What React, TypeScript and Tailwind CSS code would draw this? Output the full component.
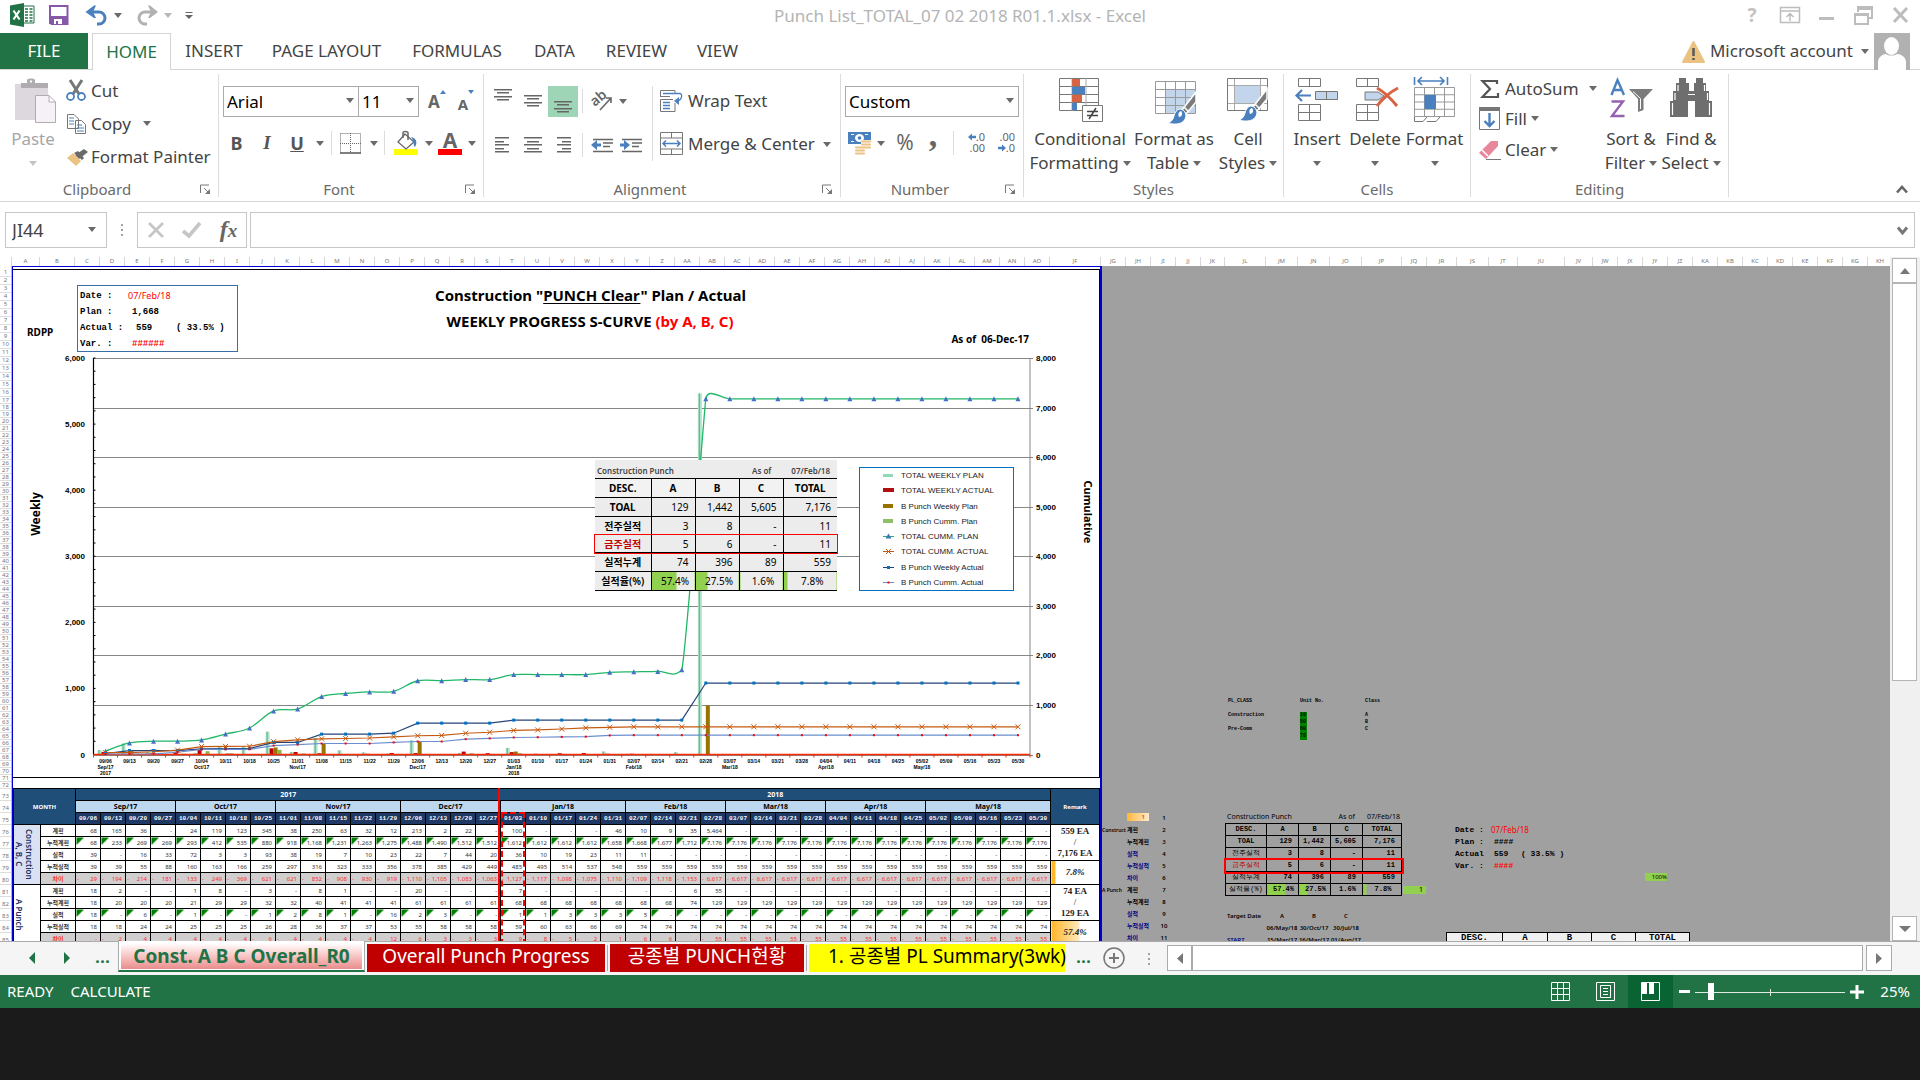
import React from "react";

const MONO = "font-['Liberation_Mono',monospace]";
const KR = "font-['Noto_Sans','Noto_Sans_CJK_KR',sans-serif]";

function Caret({ className = "fill-[#6a6a6a]" }: { className?: string }) {
  return (
    <svg width="8" height="5" viewBox="0 0 8 5" className={`shrink-0 ${className}`} aria-hidden="true">
      <path d="M0 0H8L4 5Z" />
    </svg>
  );
}

function Icon({ box, children }: { box: string; children: React.ReactNode }) {
  const [, , w, h] = box.split(" ");
  return (
    <svg width={w} height={h} viewBox={box} className="shrink-0 overflow-visible" fill="none" aria-hidden="true">
      {children}
    </svg>
  );
}

function ArrowButton({ label, className }: { label: string; className: string }) {
  return (
    <button type="button" aria-label={label} className={`flex items-center justify-center ${className}`}>
      <Caret />
    </button>
  );
}

/* ---------- Title bar ---------- */

function TitleBar() {
  return (
    <header className="flex h-[33px] shrink-0 items-start text-[#b4b4b4]">
      <div className="flex w-[640px] items-start">
        <div className="ml-[9px] pt-[3px]">
          <Icon box="9 3 26 24">
            <path d="M23 6H34V23H23Z" fill="#fff" stroke="#217346" />
            <path d="M25 9h3M25 12h3M25 15h3M25 18h3M25 21h3M29.500 9h3M29.500 12h3M29.500 15h3M29.500 18h3M29.500 21h3" stroke="#217346" strokeWidth="1.500" />
            <path d="M10 5.500L24 3V27L10 24.500Z" fill="#217346" />
            <path d="M13.500 10.500L19.500 19.500M19.500 10.500L13.500 19.500" stroke="#fff" strokeWidth="2.200" />
          </Icon>
        </div>
        <button type="button" aria-label="Save" className="ml-[14px] pt-[5px]">
          <Icon box="49 5 20 20">
            <path d="M50 6H67.500V24H51.500L50 22.500Z" fill="#fff" stroke="#8758a8" strokeWidth="2" />
            <path d="M49 16H68V24H49Z" fill="#8758a8" />
            <path d="M54 19H62V24H58V21H56V24H54Z" fill="#fff" />
          </Icon>
        </button>
        <button type="button" aria-label="Undo" className="ml-[16px] pt-[5px]">
          <Icon box="84 5 24 21">
            <path d="M90 12H98a6 6 0 0 1 0 12H96" stroke="#4a80bd" strokeWidth="3" />
            <path d="M84.500 12L93 5.500H95L92 12L95 18H93Z" fill="#4a80bd" />
          </Icon>
        </button>
        <ArrowButton label="Undo history" className="ml-px h-[30px] w-4" />
        <button type="button" aria-label="Redo" className="ml-[9px] pt-[5px]">
          <Icon box="134 5 24 21">
            <path d="M152 12H144a6 6 0 0 0 0 12H146" stroke="#b1b1b1" strokeWidth="3" />
            <path d="M157 12L149 5.500H147L150 12L147 18H149Z" fill="#b1b1b1" />
          </Icon>
        </button>
        <span className="ml-[5px] flex h-[30px] items-center"><Caret className="fill-[#b8b8b8]" /></span>
        <button type="button" aria-label="Customize quick access" className="ml-[13px] pt-[12px]">
          <Icon box="184 12 8 8">
            <path d="M184.500 12.500H191.500" stroke="#666" />
            <path d="M184 15H192L188 19Z" fill="#666" />
          </Icon>
        </button>
      </div>
      <h1 className="flex-1 pt-[3px] text-center text-[17px] leading-[26px]">Punch List_TOTAL_07 02 2018 R01.1.xlsx - Excel</h1>
      <div className="flex w-[640px] items-start justify-end">
        <button type="button" aria-label="Help" className="w-[20px] pt-[2px] text-[19px] leading-[26px] font-bold text-[#c3c3c3]">?</button>
        <button type="button" aria-label="Ribbon display options" className="ml-[18px] pt-[6px]">
          <Icon box="1780 6 21 18">
            <path d="M1780.500 7.500H1799.500V22.500H1780.500ZM1780.500 11H1799.500M1790 21V13M1786.500 17L1790 13.500L1793.500 17" stroke="#bdbdbd" strokeWidth="1.500" />
          </Icon>
        </button>
        <button type="button" aria-label="Minimize" className="ml-[18px] pt-[16px]">
          <Icon box="1819 16 16 4"><path d="M1819 17H1834V20H1819Z" fill="#bdbdbd" /></Icon>
        </button>
        <button type="button" aria-label="Restore" className="ml-[18px] pt-[5px]">
          <Icon box="1853 5 21 21">
            <path d="M1858 12V7H1872V18H1869M1858 9H1872" stroke="#bdbdbd" strokeWidth="2" />
            <path d="M1855 14H1868V24H1855Z M1854 15H1868" fill="#fff" stroke="#bdbdbd" strokeWidth="2" />
          </Icon>
        </button>
        <button type="button" aria-label="Close" className="mr-[11px] ml-[18px] pt-[7px]">
          <Icon box="1892 7 17 16"><path d="M1894 8L1907 22M1907 8L1894 22" stroke="#bdbdbd" strokeWidth="3" /></Icon>
        </button>
      </div>
    </header>
  );
}

function RibbonTabs() {
  const tabs = [
    { name: "INSERT", w: "w-[86px]" },
    { name: "PAGE LAYOUT", w: "w-[139px]" },
    { name: "FORMULAS", w: "w-[122px]" },
    { name: "DATA", w: "w-[73px]" },
    { name: "REVIEW", w: "w-[91px]" },
    { name: "VIEW", w: "w-[71px]" },
  ];
  return (
    <nav className="flex h-[37px] shrink-0 border-b border-[#d4d4d4] text-[17px]">
      <button type="button" className="w-[88px] bg-[#217346] text-white">FILE</button>
      <button type="button" className="-mb-px ml-1 w-[79px] border border-b-0 border-[#d4d4d4] bg-white text-[#217346]">HOME</button>
      {tabs.map((t) => (
        <button key={t.name} type="button" className={t.w}>{t.name}</button>
      ))}
      <div className="ml-auto flex items-center pr-[10px]">
        <Icon box="1681 39 25 23">
          <path d="M1693.500 41L1704 61H1683Z" fill="#eac282" stroke="#eac282" strokeWidth="2" strokeLinejoin="round" />
          <path d="M1693.500 47V55M1693.500 57V59" stroke="#5a5a5a" strokeWidth="2.500" />
        </Icon>
        <button type="button" className="ml-1 flex items-center gap-2">
          Microsoft account <Caret />
        </button>
        <svg width="36" height="37" viewBox="0 0 36 37" className="ml-[5px]" aria-hidden="true">
          <path d="M0 0H36V37H0Z" fill="#b1b1b1" />
          <ellipse cx="17.500" cy="13" rx="7.500" ry="9" fill="#fff" />
          <path d="M4 37V29c0-5 5-8 8-8c3 2 8 2 11 0c4 0 9 3 9 8v8Z" fill="#fff" />
        </svg>
      </div>
    </nav>
  );
}

/* ---------- Ribbon ---------- */

function Group({ title, width, launcher = false, children }: { title: string; width: string; launcher?: boolean; children: React.ReactNode }) {
  return (
    <section aria-label={title} className={`flex h-[123px] shrink-0 flex-col border-r border-[#dcdcdc] ${width}`}>
      <div className="flex h-[103px] shrink-0">{children}</div>
      <div className="flex h-6 shrink-0 items-center text-[15px] text-[#6a6a6a]">
        <span className="flex-1 text-center">{title}</span>
        {launcher && (
          <button type="button" aria-label={`${title} settings`} className="w-6 pl-[6px]">
            <Icon box="0 0 11 11">
              <path d="M.500 9V1H9M4 4L9 9" stroke="#777" />
              <path d="M10 5V10H5Z" fill="#777" />
            </Icon>
          </button>
        )}
      </div>
    </section>
  );
}

function BigButton({ lines, width, icon, caretBelow = false, muted = false }: { lines: string[]; width: string; icon: React.ReactNode; caretBelow?: boolean; muted?: boolean }) {
  return (
    <button type="button" className={`flex flex-col items-center text-[17px] leading-6 ${width} ${muted ? "text-[#a6a6a6]" : ""}`}>
      <span className="flex h-[53px] shrink-0 items-start pt-1">{icon}</span>
      <span className="whitespace-nowrap">{lines[0]}</span>
      {caretBelow ? (
        <span className="flex h-6 items-center"><Caret className={muted ? "fill-[#c4c4c4]" : "fill-[#6a6a6a]"} /></span>
      ) : (
        <span className="flex items-center gap-1 whitespace-nowrap">{lines[1]} <Caret /></span>
      )}
    </button>
  );
}

function Lines({ ys, long, short, align = "c" }: { ys: number[]; long: number; short: number; align?: "l" | "c" | "r" }) {
  return (
    <svg width="18" height="26" viewBox="0 0 18 26" aria-hidden="true" className="shrink-0">
      {ys.map((y, i) => {
        const w = i % 2 ? short : long;
        const x = align === "l" ? 1 : align === "r" ? 17 - w : (18 - w) / 2;
        return <rect key={y} x={x} y={y} width={w} height="1.500" fill="#666" />;
      })}
    </svg>
  );
}

const Brush = ({ x, y }: { x: number; y: number }) => (
  <g transform={`translate(${x} ${y})`}>
    <path d="M28 2L14 20L18 24L28 12Z" fill="#7b7b7b" stroke="#fff" strokeWidth="1.500" />
    <path d="M16 17L21 22" stroke="#fff" strokeWidth="1.500" />
    <path d="M13 19c-4 0-6 3-7 7c-1 4-3 6-6 7c6 2 17 2 18-7c0-3-2-6-5-7Z" fill="#4a80bd" stroke="#fff" />
    <path d="M13 21c-3 1-3 4-2 6c3 0 4-4 2-6Z" fill="#fff" />
  </g>
);

const Gridlet = ({ x, y, cols, rows, w, h, color = "#777" }: { x: number; y: number; cols: number; rows: number; w: number; h: number; color?: string }) => {
  let d = `M${x} ${y}H${x + w}V${y + h}H${x}Z`;
  for (let i = 1; i < cols; i++) d += `M${x + (w * i) / cols} ${y}V${y + h}`;
  for (let i = 1; i < rows; i++) d += `M${x} ${y + (h * i) / rows}H${x + w}`;
  return <path d={d} stroke={color} />;
};

function ClipboardGroup() {
  return (
    <Group title="Clipboard" width="w-[219px]" launcher>
      <BigButton
        width="w-[66px]"
        lines={["Paste"]}
        caretBelow
        muted
        icon={
          <Icon box="11 79 46 46">
            <path d="M16 85H49V121H16Z" fill="#ddd8dd" />
            <path d="M22 89V84H28V81C28 79 36 79 36 81V84H49V89Z" fill="#b0acb0" />
            <path d="M31 81.500h2v2h-2Z" fill="#fff" />
            <path d="M36.500 96.500H50L56.500 103V123.500H36.500ZM50 96.500V103H56.500" fill="#f5f1f7" stroke="#b0acb0" />
          </Icon>
        }
      />
      <div className="flex flex-col">
        <button type="button" className="flex h-[33px] items-center gap-[5px] text-[17px]">
          <Icon box="66 79 20 23">
            <path d="M70 80L79 94M82 80L73 94" stroke="#777" strokeWidth="3" />
            <circle cx="70.500" cy="96.500" r="3.500" stroke="#4a80bd" strokeWidth="1.800" />
            <circle cx="81.500" cy="96.500" r="3.500" stroke="#4a80bd" strokeWidth="1.800" />
          </Icon>
          Cut
        </button>
        <div className="flex h-[33px] items-center">
          <button type="button" className="flex items-center gap-[5px] text-[17px]">
            <Icon box="66 112 20 22">
              <path d="M67.500 113.500H74L78.500 118V127.500H67.500ZM75.500 119.500H81.500L85.500 123.500V132.500H75.500Z" fill="#fff" stroke="#777" />
              <path d="M69 117h5M69 120h5M69 123h5M77 124h5M77 127h7M77 130h7" stroke="#4a80bd" />
            </Icon>
            Copy
          </button>
          <ArrowButton label="Copy options" className="ml-1.5 h-6 w-5" />
        </div>
        <button type="button" className="flex h-[33px] items-center gap-[5px] text-[17px] whitespace-nowrap">
          <Icon box="66 146 20 20">
            <path d="M84 148L88 151L79 158L75 154Z" fill="#6a6a6a" />
            <path d="M78 150L84 157L82 159L74 152Z" fill="#6a6a6a" />
            <path d="M73 152L81 160L76 165L67 157Z" fill="#eac282" />
          </Icon>
          Format Painter
        </button>
      </div>
    </Group>
  );
}

function Select({ label, value, width }: { label: string; value: string; width: string }) {
  return (
    <div className={`relative h-[31px] ${width}`}>
      <select aria-label={label} defaultValue={value} className="h-full w-full appearance-none border border-[#ababab] bg-white pl-[3px] text-[17px] text-black">
        <option>{value}</option>
      </select>
      <span className="pointer-events-none absolute top-3 right-[5px]"><Caret /></span>
    </div>
  );
}

const Sep = ({ className = "" }: { className?: string }) => <span className={`h-6 w-px shrink-0 bg-[#dcdcdc] ${className}`} />;

function FontGroup() {
  const tool = "flex h-8 shrink-0 items-center justify-center text-[#555]";
  return (
    <Group title="Font" width="w-[265px]" launcher>
      <div className="flex flex-col pt-3 pl-1">
        <div className="flex h-[31px]">
          <Select label="Font name" value="Arial" width="w-[136px]" />
          <div className="-ml-px"><Select label="Font size" value="11" width="w-[61px]" /></div>
          <button type="button" aria-label="Increase font size" className="ml-[9px] flex text-[17px] leading-8 font-bold text-[#666]">
            A<svg width="6" height="4" viewBox="0 0 6 4" className="mt-1" aria-hidden="true"><path d="M0 4L3 0L6 4Z" fill="#4a80bd" /></svg>
          </button>
          <button type="button" aria-label="Decrease font size" className="ml-3 flex text-[15px] leading-9 font-bold text-[#666]">
            A<svg width="6" height="4" viewBox="0 0 6 4" className="mt-1" aria-hidden="true"><path d="M0 0L3 4L6 0Z" fill="#4a80bd" /></svg>
          </button>
        </div>
        <div className="mt-[10px] flex h-8 items-center">
          <button type="button" className={`${tool} w-[27px] text-[18px] font-bold`}>B</button>
          <button type="button" className={`${tool} w-[34px] font-['Liberation_Serif',serif] text-[19px] font-bold italic`}>I</button>
          <button type="button" className={`${tool} w-[26px] text-[18px] font-bold underline`}>U</button>
          <ArrowButton label="Underline options" className="w-[19px]" />
          <Sep className="mx-0.5" />
          <button type="button" aria-label="Borders" className={`${tool} w-[34px]`}>
            <Icon box="341 132 22 22">
              <path d="M341.500 133.500H361.500V153M341.500 133.500V153M351.500 133V153M341 143.500H362" stroke="#666" strokeDasharray="1 1" />
              <path d="M341 153H362" stroke="#555" strokeWidth="1.500" />
            </Icon>
          </button>
          <ArrowButton label="Border options" className="w-3" />
          <Sep className="mx-1" />
          <button type="button" aria-label="Fill color" className={`${tool} w-[34px]`}>
            <Icon box="394 132 25 24">
              <path d="M394 150H418V156H394Z" fill="#ff0" />
              <path d="M405 135L414 143L406 150L398 143Z" fill="#fff" stroke="#666" strokeWidth="1.300" />
              <path d="M403 139V133.500C403 132 408 132 408 134V141" stroke="#666" strokeWidth="1.500" />
              <path d="M411 138C416 139 418 143 415 148C413 147 415 143 411 138Z" fill="#4a80bd" />
            </Icon>
          </button>
          <ArrowButton label="Fill color options" className="w-3" />
          <button type="button" aria-label="Font color" className={`${tool} w-[30px] flex-col`}>
            <span className="text-[21px] leading-[18px] font-bold text-[#666]">A</span>
            <span className="h-1.5 w-6 bg-[#f00]" />
          </button>
          <ArrowButton label="Font color options" className="w-[13px]" />
        </div>
      </div>
    </Group>
  );
}

function AlignmentGroup() {
  const cell = "flex h-[31px] w-[30px] shrink-0 items-center justify-center";
  return (
    <Group title="Alignment" width="w-[357px]" launcher>
      <div className="flex flex-col pt-[11px] pl-1">
        <div className="flex items-center">
          <button type="button" aria-label="Top align" className={cell}><Lines ys={[1, 4, 8, 11]} long={18} short={12} /></button>
          <button type="button" aria-label="Middle align" className={cell}><Lines ys={[7, 10, 14, 17]} long={18} short={12} /></button>
          <button type="button" aria-label="Bottom align" className={`${cell} bg-[#9fd5b7]`}><Lines ys={[13, 16, 20, 23]} long={18} short={12} /></button>
          <Sep className="mx-1" />
          <button type="button" aria-label="Orientation" className="ml-0.5 flex h-8 w-7 items-center justify-center">
            <Icon box="0 0 22 20">
              <text x="1" y="13" transform="rotate(-40 6 12)" fontSize="14" fontWeight="600" fill="#666">ab</text>
              <path d="M8 19L19 7M19 12V7H14" stroke="#666" strokeWidth="1.600" />
            </Icon>
          </button>
          <ArrowButton label="Orientation options" className="w-3" />
        </div>
        <div className="mt-[12px] flex items-center">
          <button type="button" aria-label="Align left" className={cell}><Lines ys={[5, 9, 12, 16, 19]} long={14} short={9} align="l" /></button>
          <button type="button" aria-label="Center" className={cell}><Lines ys={[5, 9, 12, 16, 19]} long={18} short={12} /></button>
          <button type="button" aria-label="Align right" className={cell}><Lines ys={[5, 9, 12, 16, 19]} long={14} short={9} align="r" /></button>
          <Sep className="mr-2 ml-1" />
          {["Decrease indent", "Increase indent"].map((name, i) => (
            <button key={name} type="button" aria-label={name} className="flex h-8 w-[29px] items-center">
              <Icon box="0 0 22 15">
                <path d="M2 1.500H22M12 5H22M12 8.500H19M2 13.500H22" stroke="#666" strokeWidth="1.400" />
                <path d={i ? "M10 7L4 2V5.500H0V8.500H4V12Z" : "M0 7L6 2V5.500H10V8.500H6V12Z"} fill="#4a80bd" />
              </Icon>
            </button>
          ))}
        </div>
      </div>
      <div className="mt-3 ml-[3px] h-[75px] w-px bg-[#dcdcdc]" />
      <div className="ml-[7px] flex flex-col pt-[11px] text-[17px]">
        <button type="button" className="flex h-8 items-center gap-1 whitespace-nowrap">
          <Icon box="0 0 24 23">
            <path d="M.500 7V.500H15V4M.500 6.500H10M15 13V21.500H.500V9.500H13" stroke="#777" />
            <path d="M3 3.500H20C23 4 22 11 16 11M3 12.500H10M3 15.500H10M3 18.500H10" stroke="#4a80bd" strokeWidth="1.300" />
            <path d="M14 11L19 7V15Z" fill="#4a80bd" />
          </Icon>
          Wrap Text
        </button>
        <div className="mt-[11px] flex h-8 items-center">
          <button type="button" className="flex items-center gap-1 whitespace-nowrap">
            <Icon box="0 0 24 24">
              <path d="M.500 .500H22.500V22.500H.500ZM.500 6H22.500M.500 17H22.500M11.500 .500V6M11.500 17V22.500" stroke="#777" />
              <path d="M3 11.500H20M6 8.500L3 11.500L6 14.500M17 8.500L20 11.500L17 14.500" stroke="#4a80bd" strokeWidth="1.500" />
            </Icon>
            Merge &amp; Center
          </button>
          <ArrowButton label="Merge options" className="ml-1 w-4" />
        </div>
      </div>
    </Group>
  );
}

const SmallArrow = ({ right = false }: { right?: boolean }) => (
  <svg width="8" height="8" viewBox="0 0 8 8" className="shrink-0" aria-hidden="true">
    <path d={right ? "M8 4L4 .500V2.800H0V5.200H4V7.500Z" : "M0 4L4 .500V2.800H8V5.200H4V7.500Z"} fill="#4a80bd" />
  </svg>
);

function NumberGroup() {
  const dec = "flex h-6 w-[22px] flex-col items-end text-[11px] leading-[11px]";
  return (
    <Group title="Number" width="w-[183px]" launcher>
      <div className="flex flex-col pt-3 pl-1">
        <Select label="Number format" value="Custom" width="w-[174px]" />
        <div className="mt-[10px] flex h-8 items-center text-[#666]">
          <button type="button" aria-label="Accounting format" className="ml-[3px]">
            <Icon box="0 0 24 23">
              <path d="M0 0H23V12H0Z" fill="#4a80bd" />
              <ellipse cx="11.500" cy="6" rx="4.500" ry="4" fill="#fff" /><circle cx="11.500" cy="6" r="1.800" fill="#4a80bd" />
              <path d="M3 2.500h3M3 9.500h3M17 2.500h3" stroke="#fff" />
              <path d="M13 8h10v9H13ZM7 14h11v9H7Z" fill="#fff" />
              <path d="M14 9.500h8M14 12.500h8M14 15.500h8M8 15.500h8M8 18.500h8M8 21.500h8" stroke="#eac282" strokeWidth="2" strokeLinecap="round" />
            </Icon>
          </button>
          <ArrowButton label="Accounting options" className="ml-px w-4" />
          <button type="button" className="w-[32px] text-[21px]">%</button>
          <button type="button" className="w-[24px] pb-4 font-['Liberation_Serif',serif] text-[34px] leading-4 font-bold">,</button>
          <Sep className="ml-2" />
          <button type="button" aria-label="Increase decimal" className={`${dec} ml-[9px]`}>
            <span className="flex items-center"><SmallArrow />.0</span>
            <span>.00</span>
          </button>
          <button type="button" aria-label="Decrease decimal" className={`${dec} ml-2`}>
            <span>.00</span>
            <span className="flex items-center"><SmallArrow right />.0</span>
          </button>
        </div>
      </div>
    </Group>
  );
}

function StylesGroup() {
  return (
    <Group title="Styles" width="w-[260px]">
      <BigButton
        width="ml-1 w-[104px]"
        lines={["Conditional", "Formatting"]}
        icon={
          <Icon box="1058 79 46 45">
            <Gridlet x={1060.5} y={79.5} cols={1} rows={4} w={39} h={32} />
            <path d="M1073 79V112M1087 79V112" stroke="#aaa" />
            <path d="M1073 80h8v7h-8ZM1073 96h10v7h-10Z" fill="#d86344" />
            <path d="M1073 88h13v7h-13ZM1073 104h5v7h-5Z" fill="#4a80bd" />
            <path d="M1083.500 106.500H1103.500V122.500H1083.500Z" fill="#fff" stroke="#777" />
            <path d="M1088 112.500H1099M1088 116.500H1099M1097 109L1090 120" stroke="#444" strokeWidth="1.500" />
          </Icon>
        }
      />
      <BigButton
        width="w-[84px]"
        lines={["Format as", "Table"]}
        icon={
          <Icon box="1151 79 46 46">
            <path d="M1165 91H1195V114H1165Z" fill="#c2d5ea" />
            <Gridlet x={1155.500} y={82.500} cols={4} rows={4} w={40} h={32} color="#999" />
            <Brush x={1168} y={91} />
          </Icon>
        }
      />
      <BigButton
        width="w-16"
        lines={["Cell", "Styles"]}
        icon={
          <Icon box="1225 79 46 46">
            <Gridlet x={1227.500} y={79.500} cols={1} rows={1} w={40} h={32} />
            <path d="M1228 86.500H1267M1228 104.500H1267M1234.500 80V111M1260.500 80V111" stroke="#aaa" />
            <path d="M1235 87H1260V104H1235Z" fill="#c2d5ea" />
            <Brush x={1239} y={88} />
          </Icon>
        }
      />
    </Group>
  );
}

function CellsGroup() {
  return (
    <Group title="Cells" width="w-[187px]">
      <BigButton
        width="ml-1 w-[58px]"
        lines={["Insert"]}
        caretBelow
        icon={
          <Icon box="1294 79 46 44">
            <Gridlet x={1298.500} y={79.500} cols={2} rows={1} w={22} h={8} />
            <path d="M1315 93H1338V101H1315Z" fill="#c2d5ea" />
            <Gridlet x={1315.500} y={92.500} cols={2} rows={1} w={22} h={8} />
            <Gridlet x={1298.500} y={105.500} cols={2} rows={2} w={22} h={16} />
            <path d="M1311 96.500H1297M1302 91L1296.500 96.500L1302 102" stroke="#4a80bd" strokeWidth="2.200" />
          </Icon>
        }
      />
      <BigButton
        width="w-[58px]"
        lines={["Delete"]}
        caretBelow
        icon={
          <Icon box="1352 79 46 44">
            <Gridlet x={1356.500} y={79.500} cols={2} rows={1} w={22} h={8} />
            <path d="M1365 93H1378L1384 97L1378 101H1365Z" fill="#c2d5ea" stroke="#777" />
            <Gridlet x={1356.500} y={105.500} cols={2} rows={2} w={22} h={16} />
            <path d="M1377 89C1384 93 1393 102 1397 107M1398 89C1390 93 1381 101 1377 107" stroke="#d86344" strokeWidth="3" />
          </Icon>
        }
      />
      <BigButton
        width="w-[61px]"
        lines={["Format"]}
        caretBelow
        icon={
          <Icon box="1412 79 46 44">
            <path d="M1414.500 78V86M1447.500 78V86M1418 82H1444M1422 78L1418 82L1422 86M1440 78L1444 82L1440 86" stroke="#4a80bd" strokeWidth="1.600" />
            <Gridlet x={1414.500} y={88.500} cols={4} rows={4} w={40} h={29} color="#999" />
            <path d="M1424.500 96H1436V110H1424.500Z" fill="#4a80bd" />
            <path d="M1414.500 118V122.500H1423L1427 118M1427 122.500H1436L1440 118" stroke="#777" />
          </Icon>
        }
      />
    </Group>
  );
}

function EditingGroup() {
  return (
    <Group title="Editing" width="w-[258px]">
      <div className="ml-2 flex w-[131px] flex-col text-[17px]">
        <div className="flex h-[29px] items-center">
          <button type="button" className="flex items-center gap-1">
            <Icon box="1479 79 22 18">
              <path d="M1497 83V80H1482.500L1490 88L1482.500 96H1498V92" stroke="#555" strokeWidth="2.200" />
            </Icon>
            AutoSum
          </button>
          <ArrowButton label="AutoSum options" className="ml-1 w-5" />
        </div>
        <button type="button" className="flex h-[31px] items-center gap-1">
          <Icon box="1479 107 22 24">
            <path d="M1479.500 108.500H1499.500V129.500H1479.500Z" stroke="#777" fill="#fff" />
            <path d="M1479 107H1500V111H1479Z" fill="#777" />
            <path d="M1489.500 113V126M1484.500 121L1489.500 126L1494.500 121" stroke="#4a80bd" strokeWidth="2.400" />
          </Icon>
          Fill <Caret />
        </button>
        <button type="button" className="flex h-[31px] items-center gap-1">
          <Icon box="1479 139 22 20">
            <path d="M1491 140H1498V145L1486 158L1479 152Z" fill="#e8869c" />
            <path d="M1482 149L1488 155" stroke="#fff" strokeWidth="1.500" />
            <path d="M1486 158.500H1501" stroke="#777" />
          </Icon>
          Clear <Caret />
        </button>
      </div>
      <BigButton
        width="-ml-[9px] w-[60px]"
        lines={["Sort &", "Filter"]}
        icon={
          <Icon box="1609 78 45 41">
            <path d="M1611.500 95L1617.500 80L1624 95M1613.500 90H1621.500" stroke="#4a80bd" strokeWidth="2.400" />
            <path d="M1611.500 101.500H1623L1612 116H1624.500" stroke="#9562b0" strokeWidth="2.400" />
            <path d="M1629 89H1653L1643.500 99V110L1638 112V99Z" fill="#7b7b7b" />
            <path d="M1633 91.500L1640.500 98.500V109" stroke="#fff" />
          </Icon>
        }
      />
      <BigButton
        width="w-[60px]"
        lines={["Find &", "Select"]}
        icon={
          <Icon box="1669 79 44 40">
            <path d="M1679 79H1686V84H1689V92H1694V84H1696V79H1703V84H1706V92H1709V102H1712V118H1695V102H1688V118H1670V102H1673V92H1676V84H1679Z" fill="#6e6e6e" />
            <path d="M1678 86V92M1704.500 86V92M1675 94V101M1707.500 94V101M1672.500 104V116M1709.500 104V116M1688 95.500H1695" stroke="#fff" strokeWidth="1.200" />
          </Icon>
        }
      />
    </Group>
  );
}

function FormulaBar() {
  return (
    <div className="flex shrink-0 items-center px-[5px] pt-[10px] pb-[9px]">
      <div className="relative h-9 w-[102px]">
        <input aria-label="Name box" defaultValue="JI44" className="h-full w-full border border-[#c6c6c6] pl-[6px] text-[18px] text-[#444]" />
        <span className="absolute top-[15px] right-[11px]"><Caret /></span>
      </div>
      <span className="flex w-[30px] flex-col items-center gap-[3px]">
        <i className="size-0.5 bg-[#a0a0a0]" /><i className="size-0.5 bg-[#a0a0a0]" /><i className="size-0.5 bg-[#a0a0a0]" />
      </span>
      <div className="flex h-9 w-[110px] items-center justify-around border border-[#c6c6c6]">
        <button type="button" aria-label="Cancel">
          <Icon box="0 0 18 16"><path d="M2 1L16 15M16 1L2 15" stroke="#c6c6c6" strokeWidth="2.800" /></Icon>
        </button>
        <button type="button" aria-label="Enter">
          <Icon box="0 0 20 16"><path d="M1 9L7 14L18 1" stroke="#c6c6c6" strokeWidth="3.600" /></Icon>
        </button>
        <button type="button" aria-label="Insert function" className="font-['Liberation_Serif',serif] text-[24px] leading-7 font-bold text-[#666] italic">
          f<span className="text-[19px]">x</span>
        </button>
      </div>
      <div className="relative ml-[3px] h-9 flex-1">
        <input aria-label="Formula" className="h-full w-full border border-[#c6c6c6]" />
        <span className="absolute top-[14px] right-[6px]">
          <Icon box="0 0 13 10"><path d="M2 1.500L6.500 7L11 1.500" stroke="#777" strokeWidth="3" /></Icon>
        </span>
      </div>
    </div>
  );
}

/* ---------- Sheet data ---------- */

const fill = (head: number[], last: number, n = 39) => [...head, ...Array(Math.max(0, n - head.length)).fill(last)] as number[];
const MONTHS: [string, number][] = [["Sep/17", 4], ["Oct/17", 4], ["Nov/17", 5], ["Dec/17", 4], ["Jan/18", 5], ["Feb/18", 4], ["Mar/18", 4], ["Apr/18", 4], ["May/18", 5]];
const DATES = "09/06 09/13 09/20 09/27 10/04 10/11 10/18 10/25 11/01 11/08 11/15 11/22 11/29 12/06 12/13 12/20 12/27 01/03 01/10 01/17 01/24 01/31 02/07 02/14 02/21 02/28 03/07 03/14 03/21 03/28 04/04 04/11 04/18 04/25 05/02 05/09 05/16 05/23 05/30".split(" ");
const PLAN = fill([68, 165, 36, 0, 24, 119, 123, 345, 38, 250, 63, 32, 12, 213, 2, 22, 0, 100, 0, 0, 0, 46, 10, 9, 35, 5464], 0);
const CPLAN = fill([68, 233, 269, 269, 293, 412, 535, 880, 918, 1168, 1231, 1263, 1275, 1488, 1490, 1512, 1512, 1612, 1612, 1612, 1612, 1658, 1668, 1677, 1712], 7176);
const ACT = fill([39, 0, 16, 33, 72, 3, 3, 93, 38, 19, 7, 10, 23, 22, 7, 44, 20, 36, 10, 19, 23, 11, 11], 0);
const CACT = fill([39, 39, 55, 88, 160, 163, 166, 259, 297, 316, 323, 333, 356, 378, 385, 429, 449, 485, 495, 514, 537, 548], 559);
const APLAN = fill([18, 2, 0, 0, 1, 8, 0, 3, 0, 8, 1, 0, 0, 20, 0, 0, 0, 7, 0, 0, 0, 0, 0, 0, 6, 55], 0);
const ACPLAN = fill([18, 20, 20, 20, 21, 29, 29, 32, 32, 40, 41, 41, 41, 61, 61, 61, 61, 68, 68, 68, 68, 68, 68, 68, 74], 129);
const AACT = fill([18, 0, 6, 0, 1, 0, 0, 1, 2, 8, 1, 0, 16, 2, 3, 0, 0, 1, 1, 3, 3, 3, 5], 0);
const ACACT = fill([18, 18, 24, 24, 25, 25, 25, 26, 28, 36, 37, 37, 53, 55, 58, 58, 58, 59, 60, 63, 66, 69], 74);
const BPLAN = fill([20, 80, 80, 80, 115, 118, 122, 243, 243, 411, 411, 411, 430, 633, 633, 633, 633, 694, 694, 694, 694, 694, 694, 694, 694], 1442);
const BACT = fill([10, 10, 14, 45, 105, 105, 105, 180, 200, 222, 222, 222, 243, 262, 262, 310, 325, 343, 348, 355, 360, 384], 390);
const BWEEK: Record<number, number> = { 1: 50, 5: 15, 7: 106, 9: 162, 13: 192, 17: 45, 25: 742 };
const BCUM: Record<number, number> = { 3: 12, 4: 50, 5: 18, 7: 70, 8: 15, 15: 18, 17: 20 };

const fmt = (n: number) => (n === 0 ? "-" : Math.abs(n).toLocaleString("en-US"));

/* ---------- Chart ---------- */

const X0 = 93.5, X1 = 1030, Y0 = 358, Y1 = 754.5;
const STEP = (X1 - X0) / 39;
const cx = (i: number) => X0 + STEP * (i + 0.5);
const ry = (v: number) => Y1 - (v * (Y1 - Y0)) / 8000;
const ly = (v: number) => Y1 - (v * (Y1 - Y0)) / 6000;
const poly = (d: number[]) => d.map((v, i) => `${cx(i)},${ry(v)}`).join(" ");

function smooth(d: number[]) {
  const p = d.map((v, i) => [cx(i), ry(v)]);
  const clamp = (v: number) => Math.max(-9, Math.min(9, v));
  let s = `M${p[0][0]} ${p[0][1]}`;
  for (let i = 0; i < p.length - 1; i++) {
    const a = p[Math.max(0, i - 1)], b = p[i], c = p[i + 1], e = p[Math.min(p.length - 1, i + 2)];
    let c1 = [b[0] + (c[0] - a[0]) / 6, b[1] + clamp((c[1] - a[1]) / 6)];
    let c2 = [c[0] - (e[0] - b[0]) / 6, c[1] - clamp((e[1] - b[1]) / 6)];
    if (i === 24) {
      c1 = [b[0] + 4, b[1] - 14];
      c2 = [c[0] - 2, c[1] + 14];
    }
    if (i === 25) c1 = [b[0] + 2, b[1] - 12];
    s += `C${c1[0]} ${c1[1]} ${c2[0]} ${c2[1]} ${c[0]} ${c[1]}`;
  }
  return s;
}

const AXIS_MONTHS: Record<number, string[]> = { 0: ["Sep/17", "2017"], 4: ["Oct/17"], 8: ["Nov/17"], 13: ["Dec/17"], 17: ["Jan/18", "2018"], 22: ["Feb/18"], 26: ["Mar/18"], 30: ["Apr/18"], 34: ["May/18"] };

function Chart() {
  const bars = (get: (i: number) => number, off: number, color: string, width = 4) =>
    DATES.map((_, i) => (get(i) > 0 ? <rect key={i} x={cx(i) + off} y={ly(get(i))} width={width} height={Y1 - ly(get(i))} fill={color} /> : null));
  return (
    <svg width="1087" height="425" viewBox="13 352 1087 425" className="block font-['Liberation_Sans',sans-serif]" role="img" aria-label="Weekly progress S-curve">
      {[0, 1, 2, 3, 4, 5, 6, 7, 8].map((k) => (
        <g key={k}>
          <path d={`M${X0} ${Math.round(ry(k * 1000)) + 0.5}H${X1 + 3}`} stroke="#868686" />
          <text x="1036" y={ry(k * 1000) + 3} fontSize="8" fontWeight="700">{(k * 1000).toLocaleString("en-US")}</text>
        </g>
      ))}
      <path d={`M${X1} ${Y0}V${Y1}`} stroke="#868686" />
      {[0, 1, 2, 3, 4, 5, 6].map((k) => (
        <text key={k} x="85" y={ly(k * 1000) + 3} fontSize="8" fontWeight="700" textAnchor="end">{(k * 1000).toLocaleString("en-US")}</text>
      ))}
      {Array.from({ length: 31 }, (_, k) => <path key={k} d={`M${X0} ${ly(k * 200)}h2`} stroke="#000" />)}
      <path d={`M${X0} ${Y0}V${Y1}`} stroke="#000" strokeWidth="1.200" />
      {bars((i) => PLAN[i], -8, "#b0e4ca")}
      {bars((i) => PLAN[i], -7, "#5cae86", 1)}
      {bars((i) => ACT[i], -4, "#c00000")}
      {bars((i) => BWEEK[i] ?? 0, 0, "#997300")}
      {bars((i) => BCUM[i] ?? 0, 4, "#8cb450")}
      <path d={`M${X0} ${Y1}H${X1}`} stroke="#ff2a00" strokeWidth="1.500" />
      {Array.from({ length: 40 }, (_, i) => <path key={i} d={`M${X0 + STEP * i} ${Y1}v3`} stroke="#ff2a00" />)}
      <path d={smooth(CPLAN)} fill="none" stroke="#1fb868" strokeWidth="1.300" />
      <polyline points={poly(BPLAN)} fill="none" stroke="#264478" strokeWidth="1.200" />
      <polyline points={poly(CACT)} fill="none" stroke="#c55a11" strokeWidth="1.200" />
      <polyline points={poly(BACT)} fill="none" stroke="#6a8fd0" strokeWidth="1.200" />
      {DATES.map((t, i) => (
        <g key={t + i}>
          <path d={`M${cx(i)} ${ry(CPLAN[i]) - 2.500}l2.500 5h-5Z`} fill="#4472c4" />
          <rect x={cx(i) - 1.500} y={ry(BPLAN[i]) - 1.500} width="3" height="3" fill="#0070c0" />
          <path d={`M${cx(i) - 2.500} ${ry(CACT[i]) - 2.500}l5 5m0-5l-5 5`} stroke="#c55a11" />
          <rect x={cx(i) - 1} y={ry(BACT[i]) - 1} width="2" height="2" fill="#f00" />
          <text x={cx(i)} y="763" fontSize="5" fontWeight="700" textAnchor="middle">{t}</text>
          {(AXIS_MONTHS[i] ?? []).map((m, k) => (
            <text key={m} x={cx(i)} y={769 + k * 6} fontSize="5" fontWeight="700" textAnchor="middle">{m}</text>
          ))}
        </g>
      ))}
      <text transform="translate(40 514) rotate(-90)" fontSize="12" fontWeight="700" textAnchor="middle" className={KR}>Weekly</text>
      <text transform="translate(1084 512) rotate(90)" fontSize="11" fontWeight="700" textAnchor="middle" className={KR}>Cumulative</text>
    </svg>
  );
}

const SUMMARY: string[][] = [
  ["TOAL", "129", "1,442", "5,605", "7,176"],
  ["전주실적", "3", "8", "-", "11"],
  ["금주실적", "5", "6", "-", "11"],
  ["실적누계", "74", "396", "89", "559"],
  ["실적율(%)", "57.4%", "27.5%", "1.6%", "7.8%"],
];
const BAR_LARGE = [
  "",
  "bg-[linear-gradient(90deg,#92d050_25px,transparent_25px)]",
  "bg-[linear-gradient(90deg,#92d050_12px,transparent_12px)]",
  "bg-[linear-gradient(90deg,#92d050_1px,transparent_1px)]",
  "bg-[linear-gradient(90deg,#92d050_4px,transparent_4px)]",
];
const BAR_SMALL = [
  "",
  "bg-[linear-gradient(90deg,#92d050_18px,transparent_18px)]",
  "bg-[linear-gradient(90deg,#92d050_8px,transparent_8px)]",
  "",
  "bg-[linear-gradient(90deg,#92d050_3px,transparent_3px)]",
];

function ChartSummary() {
  return (
    <div className={`absolute top-[191px] left-[582px] w-[242px] bg-[#ececec] ${KR}`}>
      <div className="flex h-[18px] items-end pl-0.5 text-[8px] leading-[14px] font-semibold">
        <span className="flex-1">Construction Punch</span>
        <span>As of</span>
        <span className="mr-[7px] ml-5">07/Feb/18</span>
      </div>
      <table className="w-full table-fixed border-collapse text-[10px] leading-3 text-black">
        <colgroup><col className="w-[56px]" /><col className="w-[44px]" /><col className="w-[44px]" /><col className="w-[44px]" /><col /></colgroup>
        <thead>
          <tr className="h-[19px] bg-[#f2f2f2]">
            {["DESC.", "A", "B", "C", "TOTAL"].map((h) => (
              <th key={h} className="border border-r-0 border-black p-0 font-bold first:border-l-0">{h}</th>
            ))}
          </tr>
        </thead>
        <tbody>
          {SUMMARY.map((r, ri) => (
            <tr key={r[0]} className={`${ri === 0 || ri > 2 ? "h-[19px]" : "h-[18px]"} ${ri === 2 ? "outline outline-[#f00]" : ""}`}>
              {r.map((c, i) =>
                i === 0 ? (
                  <th key={i} className={`border-y border-black p-0 whitespace-nowrap ${ri === 0 ? "font-bold" : "font-semibold"} ${ri === 2 ? "text-[#c00000]" : ""}`}>{c}</th>
                ) : ri === 4 ? (
                  <td key={i} className={`border border-r-0 border-black p-0 pl-1 text-center whitespace-nowrap ${BAR_LARGE[i]}`}>{c}</td>
                ) : (
                  <td key={i} className="border border-r-0 border-black p-0 pr-1.5 text-right">{c}</td>
                )
              )}
            </tr>
          ))}
        </tbody>
      </table>
    </div>
  );
}

function Legend() {
  const items: [string, React.ReactNode][] = [
    ["TOTAL WEEKLY PLAN", <rect key="a" x="0" y="3" width="10" height="3" fill="#8fd9b6" />],
    ["TOTAL WEEKLY ACTUAL", <rect key="a" x="0" y="2" width="11" height="4" fill="#b01010" />],
    ["B Punch Weekly Plan", <rect key="a" x="0" y="2" width="10" height="4" fill="#997300" />],
    ["B Punch Cumm. Plan", <rect key="a" x="0" y="2" width="10" height="4" fill="#8cc168" />],
    ["TOTAL CUMM. PLAN", <g key="a"><path d="M0 4.500h11" stroke="#1fb868" /><path d="M5.500 1.500l3 5h-6Z" fill="#4472c4" /></g>],
    ["TOTAL CUMM. ACTUAL", <path key="a" d="M0 4.500h11M3 2l5 5m0-5l-5 5" stroke="#c55a11" />],
    ["B Punch Weekly Actual", <g key="a"><path d="M0 4.500h11" stroke="#264478" /><path d="M4 3h3v3h-3Z" fill="#0070c0" /></g>],
    ["B Punch Cumm. Actual", <g key="a"><path d="M0 4.500h11" stroke="#6a8fd0" /><path d="M4.500 3.500h2v2h-2Z" fill="#f00" /></g>],
  ];
  return (
    <ul className="absolute top-[198px] left-[846px] flex h-[124px] w-[155px] flex-col justify-around border border-[#0070c0] bg-white pl-[23px] font-['Liberation_Sans',sans-serif] text-[8px] leading-[9px] text-[#222]">
      {items.map(([name, mark]) => (
        <li key={name} className="flex items-center gap-[7px] whitespace-nowrap">
          <svg width="11" height="9" viewBox="0 0 11 9" aria-hidden="true">{mark}</svg>
          {name}
        </li>
      ))}
    </ul>
  );
}

function ChartSheet() {
  return (
    <div className="relative border-r border-b border-black">
      <div className="mt-0.5 flex h-[83px] items-start border-t border-black">
        <span className="mt-[54px] ml-[14px] w-[50px] text-[10px] leading-4 font-bold text-black">RDPP</span>
        <div className={`mt-[15px] grid h-[67px] w-[161px] grid-cols-[48px_36px_1fr] border border-[#3a6ea5] py-0.5 pl-0.5 text-[9px] leading-4 font-bold text-black ${MONO}`}>
          <span>Date :</span><span className={`col-span-2 font-normal text-[#f00] ${KR}`}>07/Feb/18</span>
          <span>Plan :</span><span className="col-span-2 pl-1">1,668</span>
          <span>Actual :</span><span className="pl-2">559</span><span className="pl-3">( 33.5% )</span>
          <span>Var. :</span><span className="col-span-2 pl-1 text-[#f00]">######</span>
        </div>
        <div className="ml-[197px] w-[310px] pt-[12px] text-center text-[15px] leading-[26px] font-bold whitespace-nowrap text-black">
          <p>Construction "<span className="underline underline-offset-2">PUNCH Clear</span>" Plan / Actual</p>
          <p>WEEKLY PROGRESS S-CURVE <span className="text-[#f00]">(by A, B, C)</span></p>
        </div>
        <span className="mt-[61px] mr-[70px] ml-auto text-[10px] leading-4 font-bold whitespace-pre text-black">As of  06-Dec-17</span>
      </div>
      <Chart />
      <ChartSummary />
      <Legend />
    </div>
  );
}

/* ---------- Progress table ---------- */

const MONTH_END = new Set([3, 7, 12, 16, 21, 25, 29, 33, 38]);
const edge = (i: number) => (MONTH_END.has(i) ? "border-r-black" : "border-r-black [border-right-style:dotted]");

function ProgressTable() {
  const rows: { label: string; data: number[]; kind?: "flag" | "diff" }[] = [
    { label: "계획", data: PLAN },
    { label: "누적계획", data: CPLAN, kind: "flag" },
    { label: "실적", data: ACT },
    { label: "누적실적", data: CACT },
    { label: "차이", data: CACT.map((v, i) => v - CPLAN[i]), kind: "diff" },
    { label: "계획", data: APLAN },
    { label: "누적계획", data: ACPLAN },
    { label: "실적", data: AACT, kind: "flag" },
    { label: "누적실적", data: ACACT },
    { label: "차이", data: ACACT.map((v, i) => v - ACPLAN[i]), kind: "diff" },
  ];
  const remark = "border border-black bg-white p-0 text-center font-['Liberation_Serif',serif] text-[9px] leading-[11px] font-bold text-[#222]";
  return (
    <div className="relative">
      <table className={`w-[1087px] table-fixed border-collapse text-[6px] leading-[8px] text-[#333] ${KR}`}>
        <colgroup>
          <col className="w-[27px]" /><col className="w-[35px]" />
          {DATES.map((_, i) => <col key={i} className="w-[25px]" />)}
          <col />
        </colgroup>
        <thead className="text-white">
          <tr className="h-3 bg-[#1f4e79]">
            <th rowSpan={3} colSpan={2} className="border border-black p-0 font-bold">MONTH</th>
            <th colSpan={17} className="border-y border-black p-0 text-[7px]">2017</th>
            <th colSpan={22} className="border-y border-black p-0 text-[7px]">2018</th>
            <th rowSpan={3} className="border border-black p-0">Remark</th>
          </tr>
          <tr className="h-3 bg-[#bdd7ee] text-[7px] text-black">
            {MONTHS.map(([m, n]) => <th key={m} colSpan={n} className="border border-black p-0">{m}</th>)}
          </tr>
          <tr className="h-3 bg-[#1f3864]">
            {DATES.map((d, i) => <th key={i} className={`border border-black p-0 ${MONO} ${edge(i)}`}>{d}</th>)}
          </tr>
        </thead>
        <tbody>
          {rows.map((r, ri) => (
            <tr key={ri} className={`h-3 ${r.kind === "diff" ? "bg-[#d0cece] text-[#ff3030]" : "bg-white"}`}>
              {ri % 5 === 0 && (
                <th rowSpan={5} className={`border border-black p-0 text-[8px] leading-[10px] font-semibold text-[#1f2f60] ${ri === 0 ? "bg-[#d9e1f2]" : "bg-white"}`}>
                  <span className="mx-auto block [writing-mode:vertical-rl]">{ri === 0 ? <>Construction<br />A, B, C</> : "A Punch"}</span>
                </th>
              )}
              <th className="border border-black p-0 font-bold whitespace-nowrap">{r.label}</th>
              {r.data.map((v, i) => (
                <td key={i} className={`border border-black p-0 ${edge(i)} ${r.kind === "flag" ? "bg-[linear-gradient(135deg,#008000_5px,transparent_5px)]" : ""}`}>
                  <div className="flex justify-end pr-[3px] pl-px">
                    {r.kind === "diff" && v < 0 && <span className="mr-auto">-</span>}
                    {fmt(v)}
                  </div>
                </td>
              ))}
              {ri === 0 && <td rowSpan={3} className={remark}>559 EA<br /><span className="font-normal">/</span><br />7,176 EA</td>}
              {ri === 3 && <td rowSpan={2} className={`${remark} bg-[linear-gradient(90deg,#ffb628_4px,transparent_4px)] italic`}>7.8%</td>}
              {ri === 5 && <td rowSpan={3} className={remark}>74 EA<br /><span className="font-normal">/</span><br />129 EA</td>}
              {ri === 8 && <td rowSpan={2} className={`${remark} bg-[linear-gradient(90deg,#ffb628,#ffe9c0_28px,transparent_28px)] italic`}>57.4%</td>}
            </tr>
          ))}
        </tbody>
      </table>
      <div className="absolute top-0 bottom-0 left-[485px] w-0.5 bg-[#f00]" />
      <div className="absolute top-6 bottom-0 left-[488px] w-6 border-x-2 border-t-2 border-dashed border-[#f00]" />
    </div>
  );
}

/* ---------- Area outside the print range ---------- */

function SideArea() {
  const labels = ["", "계획", "누적계획", "실적", "누적실적", "차이", "계획", "누적계획", "실적", "누적실적", "차이"];
  const classes: [string, string, string][] = [
    ["PL_CLASS", "Unit No.", "Class"], ["", "", ""], ["Construction", "10", "A"], ["", "50", "B"], ["Pre-Comm", "60", "C"], ["", "70", ""],
  ];
  return (
    <div className={`flex min-w-0 flex-1 flex-col overflow-hidden bg-[#a0a0a0] text-[7px] text-black ${KR}`}>
      <div className={`mt-[432px] ml-[126px] grid grid-cols-[72px_65px_40px] text-[5px] leading-[7px] font-bold ${MONO}`}>
        {classes.map(([a, b, c], i) => (
          <React.Fragment key={i}>
            <span className="h-[7px] whitespace-nowrap">{a}</span>
            <span className="whitespace-nowrap">{i > 1 ? <span className="block w-[7px] bg-[#008000]">{b}</span> : b}</span>
            <span>{c}</span>
          </React.Fragment>
        ))}
      </div>
      <div className="mt-[71px] flex items-start">
        <div className="grid w-[123px] shrink-0 grid-cols-[25px_27px_20px] leading-[9px]">
          {labels.map((l, i) => (
            <React.Fragment key={i}>
              <span className="flex h-3 items-end text-[5px] font-semibold whitespace-nowrap">{i === 1 ? "Construct" : i === 6 ? "A Punch" : ""}</span>
              <span className={`flex h-3 items-end text-[6px] font-semibold whitespace-nowrap ${[3, 4, 5, 8, 9, 10].includes(i) ? "text-[#000080]" : ""}`}>
                {i === 0 ? <span className="mb-0.5 block h-2 w-[22px] bg-linear-to-r from-[#ffb628] to-[#ffe9c8] pr-1 text-right text-[6px] text-[#c55a11]">1</span> : l}
              </span>
              <span className="flex h-3 items-end justify-center text-[6px] font-semibold">{i + 1}</span>
            </React.Fragment>
          ))}
        </div>
        <div className="w-[201px] shrink-0">
          <div className="flex h-3 w-[175px] pl-[2px] text-[7px] leading-3">
            <span className="flex-1">Construction Punch</span><span>As of</span><span className="ml-3">07/Feb/18</span>
          </div>
          <div className="flex items-end">
            <table className={`w-[177px] table-fixed border-collapse text-[7px] leading-[9px] font-semibold ${MONO}`}>
              <colgroup><col className="w-[41px]" /><col className="w-8" /><col className="w-8" /><col className="w-8" /><col /></colgroup>
              <thead>
                <tr className="h-3">{["DESC.", "A", "B", "C", "TOTAL"].map((h) => <th key={h} className="border border-black p-0">{h}</th>)}</tr>
              </thead>
              <tbody>
                {SUMMARY.map((r, ri) => (
                  <tr key={r[0]} className={`h-3 ${ri === 2 ? "outline-2 outline-[#f00]" : ""}`}>
                    {r.map((c, i) =>
                      i === 0 ? (
                        <th key={i} className={`border border-black p-0 whitespace-nowrap ${ri === 0 ? "font-bold" : "font-normal"} ${ri === 2 ? "text-[#c00000]" : ""}`}>{c}</th>
                      ) : ri === 4 ? (
                        <td key={i} className={`border border-black p-0 pl-0.5 text-center ${BAR_SMALL[i]}`}>{c}</td>
                      ) : (
                        <td key={i} className="border border-black p-0 pr-1.5 text-right">{c}</td>
                      )
                    )}
                  </tr>
                ))}
              </tbody>
            </table>
            <span className="mb-0.5 ml-px h-2 w-[23px] bg-[#92d050] pr-[3px] text-right leading-2">1</span>
          </div>
          <div className="mt-[14px] grid grid-cols-[41px_32px_32px_32px] text-center text-[6px] leading-3 font-semibold whitespace-nowrap">
            <span className="pl-0.5 text-left">Target Date</span><span>A</span><span>B</span><span>C</span>
            <span /><span>06/May/18</span><span>30/Oct/17</span><span>30/Jul/18</span>
            <span className="pl-0.5 text-left text-[#000080]">START</span><span>15/Mar/17</span><span>16/Mar/17</span><span>01/Aug/17</span>
          </div>
        </div>
        <div className="ml-[20px] shrink-0 pt-[13px]">
          <div className={`ml-[9px] grid w-[120px] grid-cols-[36px_30px_1fr] text-[8px] leading-3 font-bold whitespace-nowrap ${MONO}`}>
            <span>Date :</span><span className={`col-span-2 font-normal text-[#f00] ${KR}`}>07/Feb/18</span>
            <span>Plan :</span><span className="col-span-2 pl-[3px]">####</span>
            <span>Actual</span><span className="pl-[3px]">559</span><span>( 33.5% )</span>
            <span>Var. :</span><span className="col-span-2 pl-[3px] text-[#f00]">####</span>
          </div>
          <div className="mt-px ml-[199px] h-2 w-[22px] bg-[#92d050] text-right text-[6px] leading-[9px]">100%</div>
          <table className={`mt-[51px] w-[244px] table-fixed border-collapse bg-[#f0f0f0] text-[9px] leading-[10px] ${MONO}`}>
            <colgroup><col className="w-14" /><col className="w-[45px]" /><col className="w-11" /><col className="w-11" /><col /></colgroup>
            <thead><tr>{["DESC.", "A", "B", "C", "TOTAL"].map((h) => <th key={h} className="border border-black p-0">{h}</th>)}</tr></thead>
          </table>
        </div>
      </div>
    </div>
  );
}

/* ---------- Sheet frame ---------- */

const letters = "C D E F G H I J K L M N O P Q R S T U V W X Y Z AA AB AC AD AE AF AG AH AI AJ AK AL AM AN AO".split(" ");
const OUTER: [string, string][] = [
  ["JF", "w-[51px]"], ["JG", "w-[25px]"], ["JH", "w-[25px]"], ["JI", "w-[25px]"], ["JJ", "w-[25px]"], ["JK", "w-[24px]"], ["JL", "w-[41px]"],
  ["JM", "w-[32px]"], ["JN", "w-[32px]"], ["JO", "w-[32px]"], ["JP", "w-[40px]"], ["JQ", "w-[25px]"], ["JR", "w-[30px]"],
  ["JS", "w-[32px]"], ["JT", "w-[29px]"], ["JU", "w-[47px]"], ["JV", "w-[28px]"],
  ..."JW JX JY JZ KA KB KC KD KE KF KG KH".split(" ").map((l) => [l, "w-[25px]"] as [string, string]),
];

function Sheet() {
  const head = "shrink-0 border-r border-[#d8d8d8] text-center";
  return (
    <div className="flex min-h-0 flex-1">
      <div className="flex min-w-0 flex-1 flex-col">
        <div className={`flex h-[9px] shrink-0 overflow-hidden text-[6px] leading-[9px] text-[#777] ${KR}`}>
          <span className={`${head} w-3`} />
          <span className={`${head} w-[28px]`}>A</span>
          <span className={`${head} w-[35px]`}>B</span>
          {letters.map((l) => <span key={l} className={`${head} w-[25px]`}>{l}</span>)}
          {OUTER.map(([l, w]) => <span key={l} className={`${head} ${w}`}>{l}</span>)}
        </div>
        <div className="flex min-h-0 flex-1 overflow-hidden">
          <div className="flex w-3 shrink-0 flex-col border-r border-[#b8b8b8] pt-[3px] text-center text-[6px] text-[#777]">
            {Array.from({ length: 85 }, (_, i) => (
              <span
                key={i}
                className={`shrink-0 border-b border-[#ddd] leading-[7px] ${i < 16 ? "h-2" : i < 72 ? "h-[7px]" : "flex h-3 items-end justify-center"}`}
              >
                {i + 1}
              </span>
            ))}
          </div>
          <div className="w-[1090px] shrink-0 border-t border-r-2 border-l border-[#0000d0] bg-white">
            <ChartSheet />
            <div className="mt-[10px]"><ProgressTable /></div>
          </div>
          <SideArea />
        </div>
      </div>
      <div className="flex w-[30px] shrink-0 flex-col bg-[#f0f0f0] pr-[3px] pl-0.5">
        <button type="button" aria-label="Scroll up" className="mt-px flex h-[25px] shrink-0 items-center justify-center border border-[#b5b5b5] bg-white">
          <Icon box="0 0 10 6"><path d="M0 6L5 0L10 6Z" fill="#777" /></Icon>
        </button>
        <div className="h-[398px] shrink-0 border border-[#b5b5b5] bg-white" />
        <div className="flex-1" />
        <button type="button" aria-label="Scroll down" className="flex h-[25px] shrink-0 items-center justify-center border border-[#b5b5b5] bg-white">
          <Icon box="0 0 12 6"><path d="M0 0L6 6L12 0Z" fill="#777" /></Icon>
        </button>
      </div>
    </div>
  );
}

function SheetTabs() {
  return (
    <div className={`flex h-[34px] shrink-0 items-start border-t border-[#ababab] bg-[#f5f5f5] text-[19px] leading-[24px] ${KR}`}>
      <button type="button" aria-label="Previous sheet" className="mt-[10px] ml-[29px]"><Icon box="0 0 6 12"><path d="M6 0V12L0 6Z" fill="#217346" /></Icon></button>
      <button type="button" aria-label="Next sheet" className="mt-[10px] ml-[29px]"><Icon box="0 0 6 12"><path d="M0 0V12L6 6Z" fill="#217346" /></Icon></button>
      <span className="ml-[25px] w-[23px] pt-0.5 text-[18px] font-semibold text-[#217346]">...</span>
      <button type="button" className="-mt-px h-[31px] w-[247px] border-x border-b-2 border-[#ababab] border-b-[#217346] bg-white p-0.5 pb-px font-bold whitespace-nowrap text-[#217346]">
        <span className="flex h-full items-center justify-center bg-linear-to-b from-white to-[#e88c8c]">Const. A B C Overall_R0</span>
      </button>
      <button type="button" className="mt-0.5 ml-0.5 h-7 w-[238px] bg-[#c00000] pb-1 whitespace-nowrap text-white">Overall Punch Progress</button>
      <span className="mt-[3px] ml-0.5 h-[26px] w-px bg-[#ababab]" />
      <button type="button" className="mt-0.5 ml-0.5 h-7 w-[194px] bg-[#c00000] pb-1 whitespace-nowrap text-white">공종별 PUNCH현황</button>
      <span className="mt-[3px] ml-0.5 h-[26px] w-px bg-[#ababab]" />
      <button type="button" className="mt-0.5 ml-0.5 h-7 w-[256px] bg-[#ff0] pb-1 pl-[19px] text-left whitespace-nowrap text-black">1. 공종별 PL Summary(3wk)</button>
      <span className="ml-[11px] w-[15px] pt-0.5 text-[18px] font-semibold text-[#217346]">...</span>
      <button type="button" aria-label="New sheet" className="mt-[5px] ml-[12px]">
        <Icon box="0 0 22 22"><circle cx="11" cy="11" r="10" stroke="#777" strokeWidth="1.500" /><path d="M11 6V16M6 11H16" stroke="#777" strokeWidth="2" /></Icon>
      </button>
      <span className="mt-[11px] ml-[23px] flex flex-col gap-[3px]">
        <i className="size-0.5 bg-[#a0a0a0]" /><i className="size-0.5 bg-[#a0a0a0]" /><i className="size-0.5 bg-[#a0a0a0]" />
      </span>
      <div className="mt-[3px] mr-7 ml-[17px] flex h-[26px] flex-1">
        <button type="button" aria-label="Scroll left" className="flex w-[25px] items-center justify-center border border-[#ababab] bg-white">
          <Icon box="0 0 6 11"><path d="M6 0V11L0 5.500Z" fill="#777" /></Icon>
        </button>
        <div className="flex-1 border border-[#ababab] bg-white" />
        <button type="button" aria-label="Scroll right" className="ml-[3px] flex w-[26px] items-center justify-center border border-[#ababab] bg-white">
          <Icon box="0 0 6 11"><path d="M0 0V11L6 5.500Z" fill="#777" /></Icon>
        </button>
      </div>
    </div>
  );
}

function StatusBar() {
  return (
    <footer className="flex h-[33px] shrink-0 items-center bg-[#217346] text-[15px] text-white">
      <span className="ml-[7px]">READY</span>
      <span className="ml-[17px]">CALCULATE</span>
      <button type="button" aria-label="Normal view" className="ml-auto flex h-full w-[45px] items-center justify-center">
        <Icon box="0 0 20 20"><Gridlet x={0.5} y={0.5} cols={3} rows={3} w={18} h={18} color="#fff" /></Icon>
      </button>
      <button type="button" aria-label="Page layout view" className="flex h-full w-[45px] items-center justify-center">
        <Icon box="0 0 20 20"><path d="M.500 .500H18.500V18.500H.500ZM4.500 3.500H14.500V15.500H4.500ZM7 6.500h5M7 9.500h5M7 12.500h5" stroke="#fff" /></Icon>
      </button>
      <button type="button" aria-label="Page break view" className="flex h-full w-[45px] items-center justify-center bg-[#0a6332]">
        <Icon box="0 0 20 20"><path d="M.500 .500H18.500V18.500H.500Z" stroke="#fff" /><path d="M1 1h5v11H1ZM8 1h5v11H8Z" fill="#fff" /></Icon>
      </button>
      <button type="button" aria-label="Zoom out" className="ml-[6px]"><Icon box="0 0 12 4"><path d="M0 0H11V3H0Z" fill="#fff" /></Icon></button>
      <div className="relative ml-1 flex h-5 w-[150px] items-center">
        <span className="absolute top-[10px] h-px w-full bg-[#dfeae3]" />
        <span className="absolute top-[7px] left-[75px] h-[7px] w-px bg-[#dfeae3]" />
        <input
          type="range"
          aria-label="Zoom"
          min={0}
          max={100}
          defaultValue={9}
          className="relative w-full appearance-none bg-transparent [&::-webkit-slider-thumb]:h-[17px] [&::-webkit-slider-thumb]:w-1.5 [&::-webkit-slider-thumb]:appearance-none [&::-webkit-slider-thumb]:bg-white"
        />
      </div>
      <button type="button" aria-label="Zoom in" className="ml-[5px]"><Icon box="0 0 14 14"><path d="M5.500 0H8.500V5.500H14V8.500H8.500V14H5.500V8.500H0V5.500H5.500Z" fill="#fff" /></Icon></button>
      <span className="mr-[10px] ml-4">25%</span>
    </footer>
  );
}

export default function App() {
  return (
    <div className={`flex h-screen flex-col overflow-hidden bg-[#1b1b1b] pb-[72px] ${KR}`}>
      <div className="flex min-h-0 flex-1 flex-col bg-white text-[#444]">
        <TitleBar />
        <RibbonTabs />
        <div className="flex h-[132px] shrink-0 border-b border-[#d4d4d4] pt-1">
          <ClipboardGroup />
          <FontGroup />
          <AlignmentGroup />
          <NumberGroup />
          <StylesGroup />
          <CellsGroup />
          <EditingGroup />
          <button type="button" aria-label="Collapse the ribbon" className="mt-auto mr-[11px] mb-[7px] ml-auto">
            <Icon box="0 0 14 10"><path d="M2 8.500L7 3L12 8.500" stroke="#666" strokeWidth="2.600" /></Icon>
          </button>
        </div>
        <FormulaBar />
        <Sheet />
        <SheetTabs />
        <StatusBar />
      </div>
    </div>
  );
}
